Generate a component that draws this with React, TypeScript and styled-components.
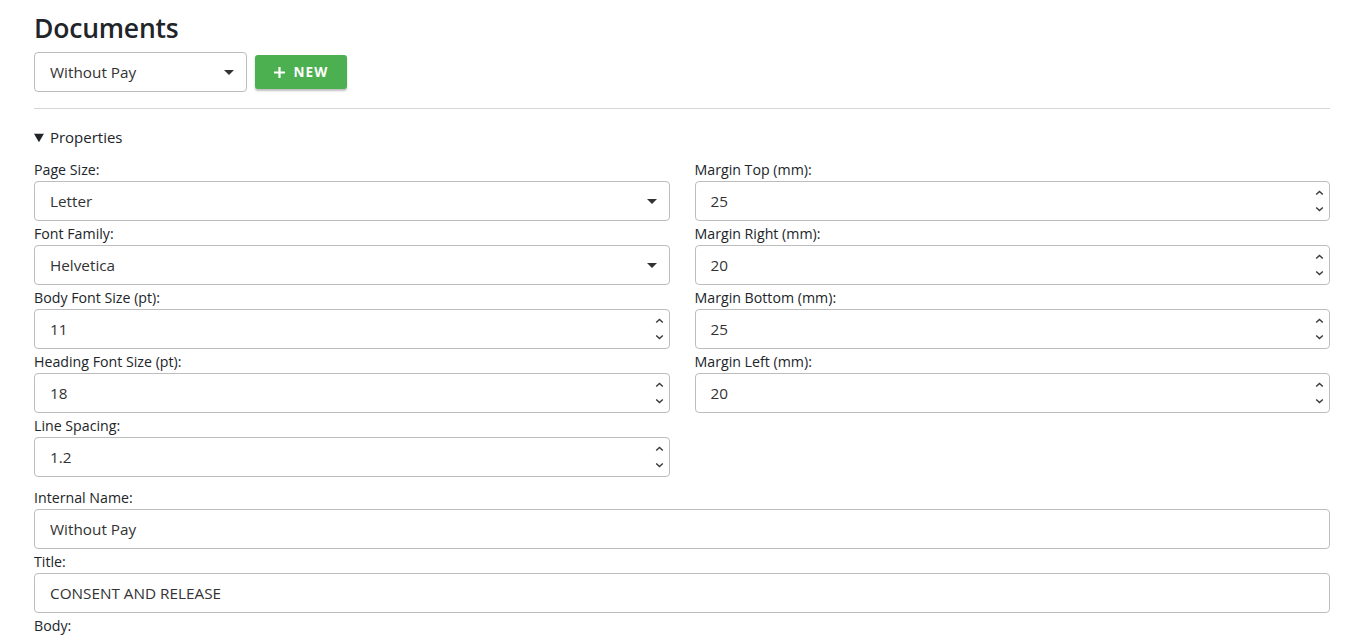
import { FC } from 'react';
import styled, { createGlobalStyle } from 'styled-components';

const GlobalStyle = createGlobalStyle`
  body {
    margin: 0;
    background: #ffffff;
    color: #212529;
    font-family: "Open Sans", "Noto Sans", sans-serif;
  }
  * {
    box-sizing: border-box;
  }
`;

interface IFieldProps {
  label: string;
  value: string;
  type?: 'text' | 'number' | 'select';
}

const Chevron: FC<{ up?: boolean }> = ({ up }) => (
  <svg width="9" height="6" viewBox="0 0 9 6">
    <path
      d={up ? 'M1.2 4.6 4.5 1.4 7.8 4.6' : 'M1.2 1.4 4.5 4.6 7.8 1.4'}
      fill="none"
      stroke="#3a3a3a"
      strokeWidth="1.4"
    />
  </svg>
);

const Field: FC<IFieldProps> = ({ label, value, type = 'text' }: IFieldProps) => {
  return (
    <FieldWrapper>
      <Label>{label}</Label>
      {type === 'select' && (
        <SelectWrapper>
          <Select defaultValue={value}>
            <option>{value}</option>
          </Select>
        </SelectWrapper>
      )}
      {type === 'number' && (
        <NumberWrapper>
          <Input type="number" step="any" defaultValue={value} />
          <Spinner>
            <Chevron up />
            <Chevron />
          </Spinner>
        </NumberWrapper>
      )}
      {type === 'text' && <Input type="text" defaultValue={value} />}
    </FieldWrapper>
  );
};

const App: FC = () => {
  return (
    <Page>
      <GlobalStyle />
      <Heading>Documents</Heading>
      <Toolbar>
        <SelectWrapper $width={213}>
          <Select defaultValue="Without Pay">
            <option>Without Pay</option>
          </Select>
        </SelectWrapper>
        <NewButton>
          <svg width="13" height="13" viewBox="0 0 13 13">
            <path d="M6.5 1v11M1 6.5h11" stroke="#fff" strokeWidth="2.2" />
          </svg>
          NEW
        </NewButton>
      </Toolbar>
      <Divider />
      <Properties open>
        <Summary>Properties</Summary>
        <Columns>
          <Column>
            <Field label="Page Size:" value="Letter" type="select" />
            <Field label="Font Family:" value="Helvetica" type="select" />
            <Field label="Body Font Size (pt):" value="11" type="number" />
            <Field label="Heading Font Size (pt):" value="18" type="number" />
            <Field label="Line Spacing:" value="1.2" type="number" />
          </Column>
          <Column>
            <Field label="Margin Top (mm):" value="25" type="number" />
            <Field label="Margin Right (mm):" value="20" type="number" />
            <Field label="Margin Bottom (mm):" value="25" type="number" />
            <Field label="Margin Left (mm):" value="20" type="number" />
          </Column>
        </Columns>
      </Properties>
      <Details>
        <Field label="Internal Name:" value="Without Pay" />
        <Field label="Title:" value="CONSENT AND RELEASE" />
        <Label>Body:</Label>
      </Details>
    </Page>
  );
};

export default App;

const Page = styled.div`
  padding: 10px 18px 0 34px;
  height: 635px;
  overflow: hidden;
`;

const Heading = styled.h1`
  margin: 0;
  font-size: 26.5px;
  line-height: 36px;
  font-weight: 600;
  color: #212529;
  letter-spacing: -0.2px;
`;

const Toolbar = styled.div`
  display: flex;
  align-items: center;
  gap: 8px;
  margin-top: 6px;
`;

const SelectWrapper = styled.div<{ $width?: number }>`
  position: relative;
  width: ${({ $width }) => ($width ? `${$width}px` : '100%')};

  &::after {
    content: '';
    position: absolute;
    right: 13px;
    top: 18px;
    border-left: 5px solid transparent;
    border-right: 5px solid transparent;
    border-top: 5px solid #333;
    pointer-events: none;
  }
`;

const Select = styled.select`
  appearance: none;
  width: 100%;
  height: 40px;
  padding: 0 30px 0 15px;
  border: 1px solid #bdbdbd;
  border-radius: 4px;
  background: #fff;
  font-family: inherit;
  font-size: 15.3px;
  color: #333;
  outline: none;
`;

const NewButton = styled.button`
  display: flex;
  align-items: center;
  justify-content: center;
  gap: 7px;
  width: 92px;
  height: 34px;
  border: none;
  border-radius: 3px;
  background: #4caf50;
  color: #ffffff;
  font-family: inherit;
  font-size: 13.5px;
  font-weight: 700;
  letter-spacing: 1.2px;
  box-shadow: 0 2px 2px rgba(0, 0, 0, 0.25);
  cursor: pointer;
`;

const Divider = styled.hr`
  margin: 16px 0 0;
  border: none;
  border-top: 1px solid #d6d6d6;
`;

const Properties = styled.details`
  margin-top: 16px;
`;

const Summary = styled.summary`
  font-size: 15px;
  line-height: 24px;
  cursor: pointer;
  margin-bottom: 8px;
`;

const Columns = styled.div`
  display: grid;
  grid-template-columns: 1fr 1fr;
  gap: 25px;
  align-items: start;
`;

const Column = styled.div`
  display: flex;
  flex-direction: column;
`;

const Details = styled.div`
  display: flex;
  flex-direction: column;
  margin-top: 8px;
`;

const FieldWrapper = styled.div`
  display: flex;
  flex-direction: column;
`;

const Label = styled.label`
  font-size: 14.2px;
  line-height: 23px;
  padding-top: 1px;
  color: #212529;
`;

const NumberWrapper = styled.div`
  position: relative;
`;

const Spinner = styled.div`
  position: absolute;
  right: 6px;
  top: 9px;
  bottom: 9px;
  display: flex;
  flex-direction: column;
  justify-content: space-between;
  pointer-events: none;

  svg {
    display: block;
  }
`;

const Input = styled.input`
  width: 100%;
  height: 40px;
  padding: 0 8px 0 15px;
  border: 1px solid #bdbdbd;
  border-radius: 4px;
  background: #fff;
  font-family: inherit;
  font-size: 15.3px;
  color: #333;
  outline: none;
  appearance: textfield;

  &::-webkit-inner-spin-button,
  &::-webkit-outer-spin-button {
    -webkit-appearance: none;
    margin: 0;
  }
`;
